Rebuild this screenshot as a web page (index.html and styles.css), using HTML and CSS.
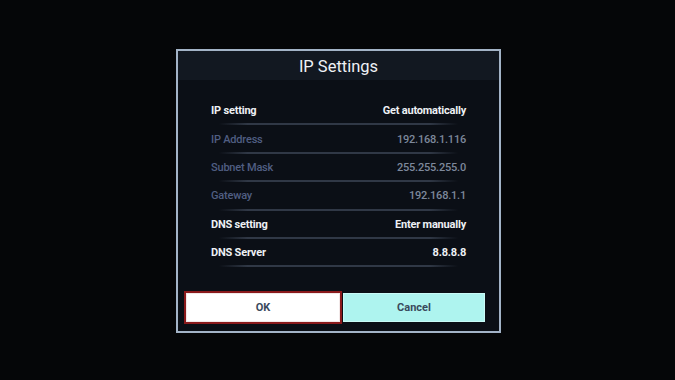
FILE: index.html
```html
<!DOCTYPE html>
<html>
<head>
<meta charset="utf-8">
<link rel="stylesheet" href="styles.css">
</head>
<body>
<div class="dialog">
  <div class="title">IP Settings</div>
  <div class="rows">
    <div class="row strong"><span>IP setting</span><span>Get automatically</span></div>
    <div class="row dim"><span>IP Address</span><span class="val">192.168.1.116</span></div>
    <div class="row dim"><span>Subnet Mask</span><span class="val">255.255.255.0</span></div>
    <div class="row dim"><span>Gateway</span><span class="val">192.168.1.1</span></div>
    <div class="row strong"><span>DNS setting</span><span>Enter manually</span></div>
    <div class="row strong"><span>DNS Server</span><span>8.8.8.8</span></div>
  </div>
  <div class="buttons">
    <div class="btn ok">OK</div>
    <div class="btn cancel">Cancel</div>
  </div>
</div>
</body>
</html>
```
FILE: styles.css
```css
html, body {
  margin: 0;
  padding: 0;
  height: 100%;
}
body {
  background: #050608;
  display: flex;
  align-items: center;
  justify-content: center;
  font-family: Roboto, "Open Sans", sans-serif;
}
.dialog {
  width: 321px;
  height: 280px;
  border: 2px solid #a3b3c7;
  background: #0b0f16;
  display: flex;
  flex-direction: column;
  margin-left: 2px;
  margin-top: 2px;
}
.title {
  height: 29px;
  background: #121821;
  color: #eef1f5;
  font-size: 16.5px;
  display: flex;
  align-items: center;
  justify-content: center;
  padding-top: 1px;
  box-sizing: border-box;
}
.rows {
  padding: 17px 33px 0 33px;
}
.row {
  height: 28.4px;
  display: flex;
  justify-content: space-between;
  align-items: center;
  font-size: 11px;
  position: relative;
  padding-bottom: 1px;
  box-sizing: border-box;
}
.row::after {
  content: "";
  position: absolute;
  left: 8px;
  right: 8px;
  bottom: 0;
  height: 2px;
  background: linear-gradient(90deg, rgba(50,58,72,0) 0%, #303846 12%, #303846 88%, rgba(50,58,72,0) 100%);
}
.strong {
  color: #eef1f5;
  font-weight: 700;
  letter-spacing: -0.2px;
}
.dim {
  color: #505e82;
  font-weight: 500;
  letter-spacing: -0.2px;
}
.dim .val {
  color: #7d889b;
}
.buttons {
  margin-top: 24px;
  padding-left: 6px;
  display: flex;
  align-items: center;
  gap: 1px;
}
.btn {
  display: flex;
  align-items: center;
  justify-content: center;
  font-size: 11px;
  font-weight: 700;
  color: #3a4a5c;
  box-sizing: border-box;
}
.ok {
  width: 158px;
  height: 33px;
  background: #ffffff;
  border: 2px solid #8a1a1c;
  box-shadow: inset 0 0 0 1px #f2e8e8;
}
.cancel {
  width: 142px;
  height: 29px;
  background: #aef4ef;
  border: 1px solid #c9fbf7;
}
```
